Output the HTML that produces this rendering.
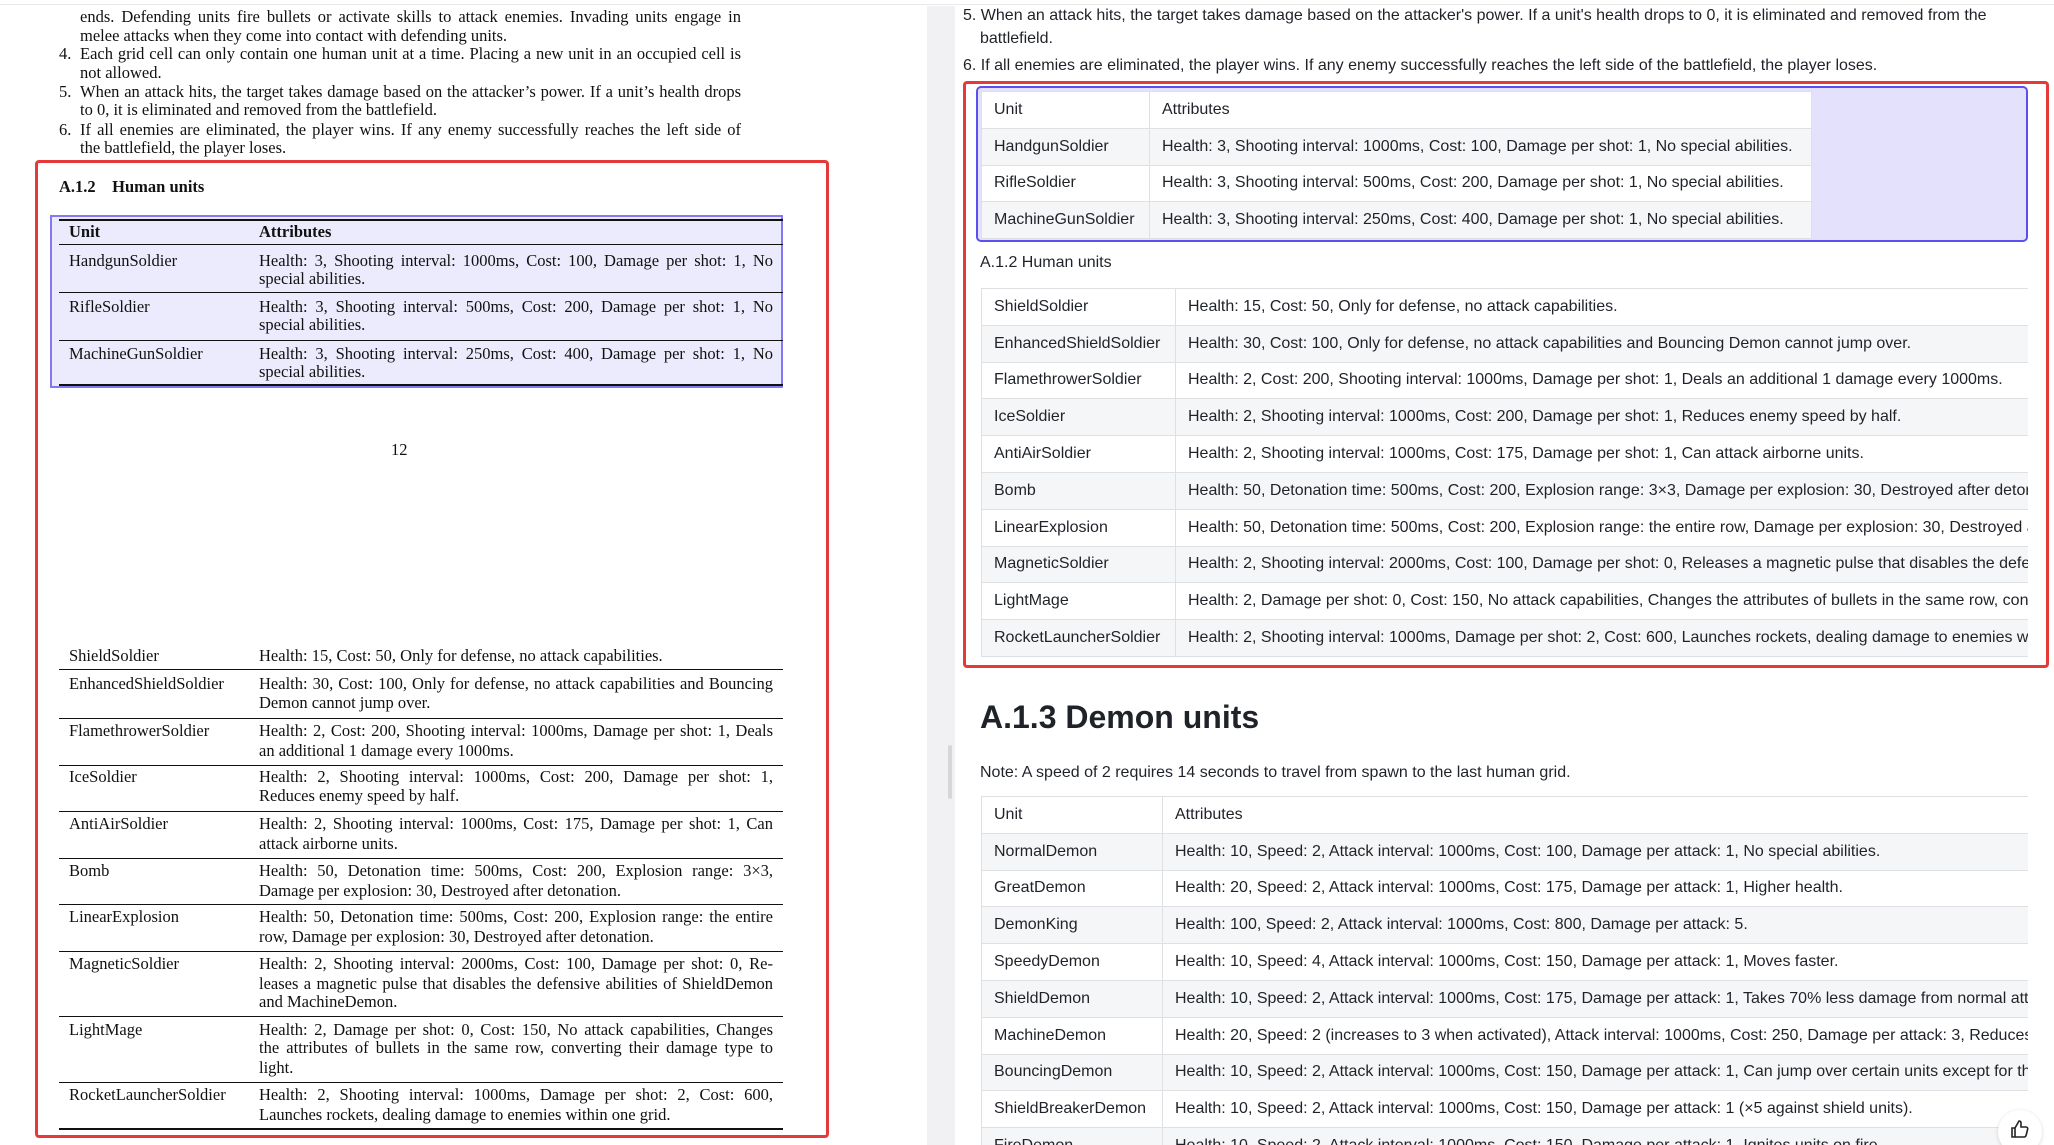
<!DOCTYPE html>
<html><head><meta charset="utf-8"><style>
*{margin:0;padding:0;box-sizing:border-box}
body{width:2054px;height:1145px;overflow:hidden;background:#fff;position:relative;font-family:"Liberation Sans",sans-serif}
.abs{position:absolute;white-space:nowrap}
.ser{font-family:"Liberation Serif",serif;font-size:16.5px;color:#111;line-height:19px}
.j{text-align:justify;text-align-last:justify;white-space:normal}
.rule{position:absolute;background:#111}
.sans{font-size:16px;color:#1f2329}
table{border-collapse:collapse;position:absolute;font-size:16px;color:#1f2329}
td{border:1px solid #dee0e3;height:36.8px;padding:0 12px;white-space:nowrap;overflow:hidden}
tr.g td{background:#f5f6f7}
.clip{position:absolute;overflow:hidden}
</style></head><body>
<div style="position:absolute;left:0;top:0;width:2054px;height:5px;border-bottom:1px solid #e8e8e8"></div>
<div style="position:absolute;left:927px;top:6px;width:28px;height:1139px;background:#f1f1f3"></div>
<div style="position:absolute;left:948px;top:745px;width:4px;height:54px;background:#d6d6d6;border-radius:2px"></div>

<!-- left page -->
<div class="abs ser j" style="left:80px;top:7px;width:661px">ends. Defending units fire bullets or activate skills to attack enemies. Invading units engage in</div>
<div class="abs ser" style="left:80px;top:26px">melee attacks when they come into contact with defending units.</div>
<div class="abs ser" style="left:59px;top:44px">4.</div>
<div class="abs ser j" style="left:80px;top:44px;width:661px">Each grid cell can only contain one human unit at a time. Placing a new unit in an occupied cell is</div>
<div class="abs ser" style="left:80px;top:63px">not allowed.</div>
<div class="abs ser" style="left:59px;top:82px">5.</div>
<div class="abs ser j" style="left:80px;top:82px;width:661px">When an attack hits, the target takes damage based on the attacker’s power. If a unit’s health drops</div>
<div class="abs ser" style="left:80px;top:100px">to 0, it is eliminated and removed from the battlefield.</div>
<div class="abs ser" style="left:59px;top:120px">6.</div>
<div class="abs ser j" style="left:80px;top:120px;width:661px">If all enemies are eliminated, the player wins. If any enemy successfully reaches the left side of</div>
<div class="abs ser" style="left:80px;top:138px">the battlefield, the player loses.</div>

<div style="position:absolute;left:35px;top:160px;width:794px;height:978px;border:3px solid #e53a3a;border-radius:4px"></div>
<div class="abs ser" style="left:59px;top:177px;font-weight:bold">A.1.2&nbsp;&nbsp;&nbsp;&nbsp;Human units</div>

<div style="position:absolute;left:50px;top:215px;width:733px;height:173px;background:#ecebfd;border:2px solid #8478f5"></div>
<div class="rule" style="left:59px;top:219px;width:724px;height:2px"></div>
<div class="abs ser" style="left:69px;top:222px;font-weight:bold">Unit</div>
<div class="abs ser" style="left:259px;top:222px;font-weight:bold">Attributes</div>
<div class="rule" style="left:59px;top:244px;width:724px;height:1px"></div>
<div class="abs ser" style="left:69px;top:251px">HandgunSoldier</div>
<div class="abs ser j" style="left:259px;top:251px;width:514px">Health: 3, Shooting interval: 1000ms, Cost: 100, Damage per shot: 1, No</div>
<div class="abs ser" style="left:259px;top:269px">special abilities.</div>
<div class="rule" style="left:59px;top:292px;width:724px;height:1px"></div>
<div class="abs ser" style="left:69px;top:297px">RifleSoldier</div>
<div class="abs ser j" style="left:259px;top:297px;width:514px">Health: 3, Shooting interval: 500ms, Cost: 200, Damage per shot: 1, No</div>
<div class="abs ser" style="left:259px;top:315px">special abilities.</div>
<div class="rule" style="left:59px;top:340px;width:724px;height:1px"></div>
<div class="abs ser" style="left:69px;top:344px">MachineGunSoldier</div>
<div class="abs ser j" style="left:259px;top:344px;width:514px">Health: 3, Shooting interval: 250ms, Cost: 400, Damage per shot: 1, No</div>
<div class="abs ser" style="left:259px;top:362px">special abilities.</div>
<div class="rule" style="left:59px;top:384px;width:724px;height:2px"></div>

<div class="abs ser" style="left:391px;top:440px">12</div>

<div class="abs ser" style="left:69px;top:646px">ShieldSoldier</div>
<div class="abs ser" style="left:259px;top:646px">Health: 15, Cost: 50, Only for defense, no attack capabilities.</div>
<div class="rule" style="left:59px;top:669px;width:724px;height:1px"></div>
<div class="abs ser" style="left:69px;top:674px">EnhancedShieldSoldier</div>
<div class="abs ser j" style="left:259px;top:674px;width:514px">Health: 30, Cost: 100, Only for defense, no attack capabilities and Bouncing</div>
<div class="abs ser" style="left:259px;top:693px">Demon cannot jump over.</div>
<div class="rule" style="left:59px;top:718px;width:724px;height:1px"></div>
<div class="abs ser" style="left:69px;top:721px">FlamethrowerSoldier</div>
<div class="abs ser j" style="left:259px;top:721px;width:514px">Health: 2, Cost: 200, Shooting interval: 1000ms, Damage per shot: 1, Deals</div>
<div class="abs ser" style="left:259px;top:741px">an additional 1 damage every 1000ms.</div>
<div class="rule" style="left:59px;top:765px;width:724px;height:1px"></div>
<div class="abs ser" style="left:69px;top:767px">IceSoldier</div>
<div class="abs ser j" style="left:259px;top:767px;width:514px">Health: 2, Shooting interval: 1000ms, Cost: 200, Damage per shot: 1,</div>
<div class="abs ser" style="left:259px;top:786px">Reduces enemy speed by half.</div>
<div class="rule" style="left:59px;top:811px;width:724px;height:1px"></div>
<div class="abs ser" style="left:69px;top:814px">AntiAirSoldier</div>
<div class="abs ser j" style="left:259px;top:814px;width:514px">Health: 2, Shooting interval: 1000ms, Cost: 175, Damage per shot: 1, Can</div>
<div class="abs ser" style="left:259px;top:834px">attack airborne units.</div>
<div class="rule" style="left:59px;top:858px;width:724px;height:1px"></div>
<div class="abs ser" style="left:69px;top:861px">Bomb</div>
<div class="abs ser j" style="left:259px;top:861px;width:514px">Health: 50, Detonation time: 500ms, Cost: 200, Explosion range: 3×3,</div>
<div class="abs ser" style="left:259px;top:881px">Damage per explosion: 30, Destroyed after detonation.</div>
<div class="rule" style="left:59px;top:904px;width:724px;height:1px"></div>
<div class="abs ser" style="left:69px;top:907px">LinearExplosion</div>
<div class="abs ser j" style="left:259px;top:907px;width:514px">Health: 50, Detonation time: 500ms, Cost: 200, Explosion range: the entire</div>
<div class="abs ser" style="left:259px;top:927px">row, Damage per explosion: 30, Destroyed after detonation.</div>
<div class="rule" style="left:59px;top:951px;width:724px;height:1px"></div>
<div class="abs ser" style="left:69px;top:954px">MagneticSoldier</div>
<div class="abs ser j" style="left:259px;top:954px;width:514px">Health: 2, Shooting interval: 2000ms, Cost: 100, Damage per shot: 0, Re-</div>
<div class="abs ser j" style="left:259px;top:974px;width:514px">leases a magnetic pulse that disables the defensive abilities of ShieldDemon</div>
<div class="abs ser" style="left:259px;top:992px">and MachineDemon.</div>
<div class="rule" style="left:59px;top:1016px;width:724px;height:1px"></div>
<div class="abs ser" style="left:69px;top:1020px">LightMage</div>
<div class="abs ser j" style="left:259px;top:1020px;width:514px">Health: 2, Damage per shot: 0, Cost: 150, No attack capabilities, Changes</div>
<div class="abs ser j" style="left:259px;top:1038px;width:514px">the attributes of bullets in the same row, converting their damage type to</div>
<div class="abs ser" style="left:259px;top:1058px">light.</div>
<div class="rule" style="left:59px;top:1082px;width:724px;height:1px"></div>
<div class="abs ser" style="left:69px;top:1085px">RocketLauncherSoldier</div>
<div class="abs ser j" style="left:259px;top:1085px;width:514px">Health: 2, Shooting interval: 1000ms, Damage per shot: 2, Cost: 600,</div>
<div class="abs ser" style="left:259px;top:1105px">Launches rockets, dealing damage to enemies within one grid.</div>
<div class="rule" style="left:59px;top:1128px;width:724px;height:2px"></div>

<!-- right page -->
<div style="position:absolute;left:955px;top:6px;width:1099px;height:1139px;overflow:hidden">
<div class="abs sans" style="left:8px;top:1px">5. When an attack hits, the target takes damage based on the attacker's power. If a unit's health drops to 0, it is eliminated and removed from the</div>
<div class="abs sans" style="left:25px;top:24px">battlefield.</div>
<div class="abs sans" style="left:8px;top:51px">6. If all enemies are eliminated, the player wins. If any enemy successfully reaches the left side of the battlefield, the player loses.</div>

<div style="position:absolute;left:21px;top:80px;width:1052px;height:156px;background:#e4e1fd;border:2px solid #5b4ff0;border-radius:5px"></div>
<table style="left:26px;top:85px;width:831px">
<tr><td style="width:168px;background:#fff">Unit</td><td style="background:#fff">Attributes</td></tr>
<tr class="g"><td>HandgunSoldier</td><td>Health: 3, Shooting interval: 1000ms, Cost: 100, Damage per shot: 1, No special abilities.</td></tr>
<tr><td style="background:#fff">RifleSoldier</td><td style="background:#fff">Health: 3, Shooting interval: 500ms, Cost: 200, Damage per shot: 1, No special abilities.</td></tr>
<tr class="g"><td>MachineGunSoldier</td><td>Health: 3, Shooting interval: 250ms, Cost: 400, Damage per shot: 1, No special abilities.</td></tr>
</table>
<div class="abs sans" style="left:25px;top:248px">A.1.2 Human units</div>
<div class="clip" style="left:26px;top:282px;width:1047px;height:380px">
<table style="left:0;top:0;width:1200px">
<tr><td style="width:194px">ShieldSoldier</td><td>Health: 15, Cost: 50, Only for defense, no attack capabilities.</td></tr>
<tr class="g"><td>EnhancedShieldSoldier</td><td>Health: 30, Cost: 100, Only for defense, no attack capabilities and Bouncing Demon cannot jump over.</td></tr>
<tr><td>FlamethrowerSoldier</td><td>Health: 2, Cost: 200, Shooting interval: 1000ms, Damage per shot: 1, Deals an additional 1 damage every 1000ms.</td></tr>
<tr class="g"><td>IceSoldier</td><td>Health: 2, Shooting interval: 1000ms, Cost: 200, Damage per shot: 1, Reduces enemy speed by half.</td></tr>
<tr><td>AntiAirSoldier</td><td>Health: 2, Shooting interval: 1000ms, Cost: 175, Damage per shot: 1, Can attack airborne units.</td></tr>
<tr class="g"><td>Bomb</td><td>Health: 50, Detonation time: 500ms, Cost: 200, Explosion range: 3×3, Damage per explosion: 30, Destroyed after detonation.</td></tr>
<tr><td>LinearExplosion</td><td>Health: 50, Detonation time: 500ms, Cost: 200, Explosion range: the entire row, Damage per explosion: 30, Destroyed after detonation.</td></tr>
<tr class="g"><td>MagneticSoldier</td><td>Health: 2, Shooting interval: 2000ms, Cost: 100, Damage per shot: 0, Releases a magnetic pulse that disables the defensive abilities.</td></tr>
<tr><td>LightMage</td><td>Health: 2, Damage per shot: 0, Cost: 150, No attack capabilities, Changes the attributes of bullets in the same row, converting.</td></tr>
<tr class="g"><td>RocketLauncherSoldier</td><td>Health: 2, Shooting interval: 1000ms, Damage per shot: 2, Cost: 600, Launches rockets, dealing damage to enemies within one grid.</td></tr>
</table>
</div>
<div style="position:absolute;left:8px;top:75px;width:1086px;height:587px;border:3px solid #e53a3a;border-radius:4px"></div>
<div class="abs" style="left:25px;top:693px;font-size:32px;font-weight:bold;color:#1f2329">A.1.3 Demon units</div>
<div class="abs sans" style="left:25px;top:758px">Note: A speed of 2 requires 14 seconds to travel from spawn to the last human grid.</div>
<div class="clip" style="left:26px;top:790px;width:1047px;height:360px">
<table style="left:0;top:0;width:1200px">
<tr><td style="width:181px">Unit</td><td>Attributes</td></tr>
<tr class="g"><td>NormalDemon</td><td>Health: 10, Speed: 2, Attack interval: 1000ms, Cost: 100, Damage per attack: 1, No special abilities.</td></tr>
<tr><td>GreatDemon</td><td>Health: 20, Speed: 2, Attack interval: 1000ms, Cost: 175, Damage per attack: 1, Higher health.</td></tr>
<tr class="g"><td>DemonKing</td><td>Health: 100, Speed: 2, Attack interval: 1000ms, Cost: 800, Damage per attack: 5.</td></tr>
<tr><td>SpeedyDemon</td><td>Health: 10, Speed: 4, Attack interval: 1000ms, Cost: 150, Damage per attack: 1, Moves faster.</td></tr>
<tr class="g"><td>ShieldDemon</td><td>Health: 10, Speed: 2, Attack interval: 1000ms, Cost: 175, Damage per attack: 1, Takes 70% less damage from normal attacks.</td></tr>
<tr><td>MachineDemon</td><td>Health: 20, Speed: 2 (increases to 3 when activated), Attack interval: 1000ms, Cost: 250, Damage per attack: 3, Reduces.</td></tr>
<tr class="g"><td>BouncingDemon</td><td>Health: 10, Speed: 2, Attack interval: 1000ms, Cost: 150, Damage per attack: 1, Can jump over certain units except for the.</td></tr>
<tr><td>ShieldBreakerDemon</td><td>Health: 10, Speed: 2, Attack interval: 1000ms, Cost: 150, Damage per attack: 1 (×5 against shield units).</td></tr>
<tr class="g"><td>FireDemon</td><td>Health: 10, Speed: 2, Attack interval: 1000ms, Cost: 150, Damage per attack: 1, Ignites units on fire.</td></tr>
</table>
</div>
<div style="position:absolute;left:1043px;top:1104px;width:44px;height:44px;border-radius:22px;background:#fff;box-shadow:0 1px 4px rgba(0,0,0,.15)"></div>
<svg style="position:absolute;left:1055px;top:1113px" width="20" height="20" viewBox="0 0 20 20" fill="none" stroke="#222" stroke-width="1.6"><path d="M2 9h3v9H2zM5 9l4-7c1.5 0 2 1 2 2v4h5c1 0 2 1 1.7 2l-1.5 6c-.3 1-1 2-2 2H5"/></svg>
</div>
</body></html>
